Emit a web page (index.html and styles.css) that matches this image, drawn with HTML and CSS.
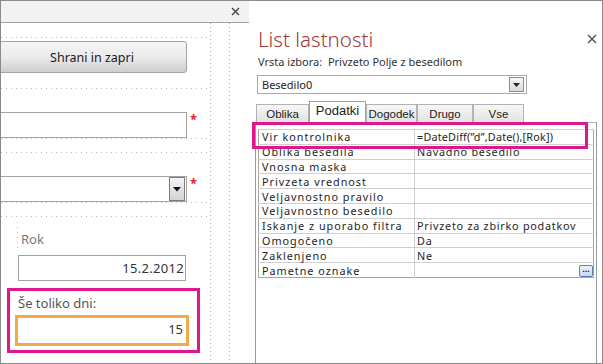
FILE: index.html
```html
<!DOCTYPE html>
<html lang="sl">
<head>
    <meta charset="UTF-8">
    <meta name="viewport" content="width=device-width, initial-scale=1.0">
    <title>List lastnosti</title>
    <link rel="stylesheet" href="styles.css">
</head>
<body>
    <div class="window">
        <div class="designer">
            <div class="designer-bar">
                <svg class="x-icon" width="9" height="9" viewBox="0 0 9 9"><path d="M1 1L8 8M8 1L1 8" stroke="#444" stroke-width="1.4"/></svg>
            </div>
            <div class="canvas">
                <div class="col-main">
                    <div class="grid-line top"></div>
                    <button class="btn">Shrani in zapri</button>
                    <div class="grid-line after-btn"></div>
                    <div class="ctl-row">
                        <div class="field"></div>
                        <span class="req">*</span>
                    </div>
                    <div class="grid-line"></div>
                    <div class="grid-line spaced"></div>
                    <div class="ctl-row">
                        <div class="field combo">
                            <span class="drop">
                                <svg width="8" height="5" viewBox="0 0 8 5"><path d="M0 0H8L4 4.5Z" fill="#111"/></svg>
                            </span>
                        </div>
                        <span class="req">*</span>
                    </div>
                    <div class="grid-line"></div>
                    <div class="grid-line spaced"></div>
                    <div class="lower">
                        <div class="label-box">Rok</div>
                        <div class="field date">15.2.2012</div>
                        <div class="grid-line short"></div>
                        <div class="hl-box">
                            <div class="calc-label">Še toliko dni:</div>
                            <div class="calc-field">15</div>
                        </div>
                    </div>
                </div>
            </div>
        </div>

        <div class="sheet">
            <div class="sheet-head">
                <div class="sheet-title">List lastnosti</div>
                <svg class="sheet-close" width="10" height="10" viewBox="0 0 10 10"><path d="M1 1L9 9M9 1L1 9" stroke="#555" stroke-width="1.5"/></svg>
            </div>
            <div class="sheet-sub">Vrsta izbora:&nbsp; Privzeto Polje z besedilom</div>
            <div class="sel">
                <span>Besedilo0</span>
                <span class="sel-btn">
                    <svg width="7" height="4" viewBox="0 0 7 4"><path d="M0 0H7L3.5 4Z" fill="#222"/></svg>
                </span>
            </div>
            <div class="tabs">
                <div class="tab">Oblika</div>
                <div class="tab active">Podatki</div>
                <div class="tab">Dogodek</div>
                <div class="tab">Drugo</div>
                <div class="tab">Vse</div>
            </div>
            <div class="tab-body">
                <table class="props">
                    <tr><td>Vir kontrolnika</td><td class="expr">=DateDiff(”d”,Date(),[Rok])</td></tr>
                    <tr><td>Oblika besedila</td><td>Navadno besedilo</td></tr>
                    <tr><td>Vnosna maska</td><td></td></tr>
                    <tr><td>Privzeta vrednost</td><td></td></tr>
                    <tr><td>Veljavnostno pravilo</td><td></td></tr>
                    <tr><td>Veljavnostno besedilo</td><td></td></tr>
                    <tr><td>Iskanje z uporabo filtra</td><td>Privzeto za zbirko podatkov</td></tr>
                    <tr><td>Omogočeno</td><td>Da</td></tr>
                    <tr><td>Zaklenjeno</td><td>Ne</td></tr>
                    <tr><td>Pametne oznake</td><td class="with-btn"><span class="dots-btn">···</span></td></tr>
                </table>
                <div class="row-mark"></div>
            </div>
        </div>
    </div>
</body>
</html>
```

FILE: styles.css
```css
* {
    box-sizing: border-box;
}
body {
    margin: 0;
    font-family: "Noto Sans", "Open Sans", sans-serif;
    color: #222;
}
.window {
    width: 603px;
    height: 364px;
    border: 1px solid #8b8b8b;
    display: flex;
    overflow: hidden;
    background: #fff;
}

/* form designer on the left */
.designer {
    width: 248px;
    display: flex;
    flex-direction: column;
}
.designer-bar {
    height: 22px;
    background: #f2f2f2;
    border-bottom: 1px solid #a0a0a0;
    display: flex;
    justify-content: flex-end;
    align-items: center;
    padding-right: 9px;
}
.canvas {
    flex: 1;
    overflow: hidden;
    background-image:
        repeating-linear-gradient(to bottom, #b5b5b5 0 1px, transparent 1px 4px),
        repeating-linear-gradient(to bottom, #b5b5b5 0 1px, transparent 1px 4px);
    background-size: 1px 100%;
    background-position: 209px 0, 228px 0;
    background-repeat: no-repeat;
}
.col-main {
    width: 209px;
    display: flex;
    flex-direction: column;
}
.grid-line {
    height: 1px;
    flex: none;
    background: repeating-linear-gradient(to right, #bdbdbd 0 1px, transparent 1px 5px);
}
.grid-line.top {
    margin-top: 14px;
}
.grid-line.spaced {
    margin-top: 13px;
}
.btn {
    margin: 3px 0 0 -6px;
    width: 192px;
    height: 32px;
    border: 1px solid #a4a4a4;
    border-radius: 3px;
    background: linear-gradient(#f6f6f6, #e9e9e9 55%, #cdcdcd);
    font-family: "Noto Sans", sans-serif;
    font-size: 12.5px;
    color: #1a1a1a;
    padding: 0 0 0 2px;
}
.grid-line.after-btn {
    margin-top: 15px;
}
.ctl-row {
    margin-top: 23px;
    display: flex;
    align-items: flex-start;
}
.field {
    margin-left: -6px;
    width: 192px;
    height: 26px;
    border: 1px solid #a3a3a3;
    background: #fff;
}
.req {
    color: #e5262b;
    font-size: 13px;
    line-height: 13px;
    margin: 1px 0 0 3px;
    font-weight: bold;
}
.combo {
    display: flex;
    justify-content: flex-end;
    align-items: center;
    padding-right: 1px;
}
.drop {
    width: 16px;
    height: 24px;
    border: 1px solid #7c7c7c;
    background: linear-gradient(#f4f4f4, #d2d2d2);
    display: flex;
    justify-content: center;
    align-items: center;
}
.lower {
    margin-left: 16px;
    display: flex;
    flex-direction: column;
    background-image: repeating-linear-gradient(to bottom, #bdbdbd 0 1px, transparent 1px 5px);
    background-size: 1px 30px;
    background-repeat: no-repeat;
    background-position: 0 5px;
}
.label-box {
    margin: 9px 0 0 1px;
    width: 63px;
    height: 25px;
    padding: 6px 0 0 3px;
    font-size: 13px;
    line-height: 15px;
    color: #7a7a7a;
}
.field.date {
    margin: 4px 0 0 1px;
    width: 168px;
    text-align: right;
    padding: 5px 1px 0 0;
    font-size: 13px;
    line-height: 15px;
    color: #333;
    letter-spacing: 0.3px;
}
.grid-line.short {
    margin-top: 3px;
    background: none;
}
.hl-box {
    margin: 3px 0 0 -10px;
    width: 193px;
    height: 65px;
    border: 3px solid #e0168c;
    padding: 5px 0 0 5px;
}
.calc-label {
    padding-left: 3px;
    font-size: 13px;
    line-height: 15px;
    color: #555;
}
.calc-field {
    margin-top: 4px;
    width: 174px;
    height: 31px;
    border: 3px solid #f2a94a;
    text-align: right;
    padding: 4px 3px 0 0;
    font-size: 13px;
    line-height: 15px;
    color: #333;
}

/* property sheet on the right */
.sheet {
    flex: 1;
    display: flex;
    flex-direction: column;
    padding-left: 6px;
    font-size: 11px;
}
.sheet-head {
    margin-top: 26px;
    display: flex;
    justify-content: space-between;
    align-items: center;
    padding: 0 5px 0 3px;
}
.sheet-title {
    font-size: 20.5px;
    line-height: 24px;
    font-weight: 300;
    color: #a4373a;
}
.sheet-sub {
    margin-top: 4px;
    padding-left: 3px;
    line-height: 14px;
    color: #333;
}
.sel {
    margin: 6px 0 0 2px;
    width: 270px;
    height: 19px;
    border: 1px solid #a9a9a9;
    display: flex;
    justify-content: space-between;
    align-items: center;
    padding: 0 2px 0 4px;
}
.sel-btn {
    width: 15px;
    height: 15px;
    border: 1px solid #8e8e8e;
    background: linear-gradient(#f7f7f7, #d9d9d9);
    display: flex;
    justify-content: center;
    align-items: center;
}
.tabs {
    margin: 7px 0 0 1px;
    height: 21px;
    display: flex;
    align-items: flex-end;
}
.tab {
    height: 18px;
    border: 1px solid #b3b3b3;
    border-bottom: none;
    background: linear-gradient(#f7f7f7, #e2e2e2);
    display: flex;
    justify-content: center;
    align-items: center;
    font-family: "Liberation Sans", Arial, sans-serif;
    font-size: 11.5px;
    color: #222;
    white-space: nowrap;
}
.tab:nth-child(1) { width: 53px; }
.tab:nth-child(2) { width: 57px; }
.tab:nth-child(3) { width: 51px; }
.tab:nth-child(4) { width: 56px; }
.tab:nth-child(5) { width: 51px; }
.tab.active {
    height: 21px;
    background: #fff;
    border-color: #a0a0a0;
    padding-bottom: 3px;
    font-size: 13px;
}
.tab-body {
    flex: 1;
    position: relative;
    border-left: 1px solid #9a9a9a;
    border-right: 1px solid #9a9a9a;
    border-top: 1px solid #b3b3b3;
    margin-right: 5px;
    padding: 6px 0 0 2px;
}
.props {
    width: 336px;
    border-collapse: collapse;
    border: 1px solid #a5a5a5;
}
.props td {
    height: 14.8px;
    padding: 0 0 0 2px;
    border-top: 1px solid #cfcfcf;
    line-height: 13px;
    font-size: 10.8px;
    letter-spacing: 0.75px;
    color: #1e1e1e;
    white-space: nowrap;
}
.props td:first-child {
    width: 156px;
    padding-left: 3px;
    letter-spacing: 1px;
    border-right: 1px solid #cfcfcf;
}
.props td.expr {
    letter-spacing: 0.2px;
}
.with-btn {
    text-align: right;
}
.dots-btn {
    display: inline-block;
    width: 14px;
    height: 12px;
    border: 1px solid #5b7fb4;
    border-radius: 2px;
    background: linear-gradient(#eef4fc, #c7d8ee);
    font-size: 9px;
    line-height: 9px;
    letter-spacing: 0;
    text-align: center;
    font-weight: bold;
    color: #1c2a48;
    vertical-align: middle;
}
.row-mark {
    position: absolute;
    left: -4px;
    top: -1px;
    width: 336px;
    height: 27px;
    border: 3px solid #e0168c;
}
```
